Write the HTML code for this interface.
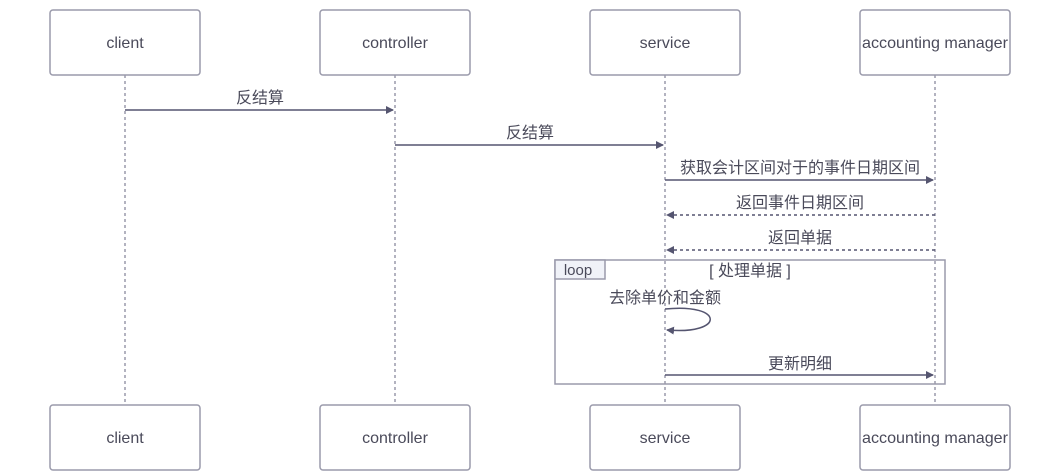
<!DOCTYPE html>
<html><head><meta charset="utf-8"><style>body{margin:0;background:#fff}svg{display:block}</style></head><body>
<svg width="1060" height="471" viewBox="0 0 1060 471" font-family="Liberation Sans, Noto Sans CJK SC, sans-serif">
<defs><marker id="a" markerWidth="8" markerHeight="8" refX="7" refY="4" orient="auto" markerUnits="userSpaceOnUse"><path d="M0,0L8,4L0,8z" fill="#555570"/></marker></defs>
<g stroke="#9a9aab" stroke-width="1.5" stroke-dasharray="3,3">
<line x1="125" y1="75" x2="125" y2="405"/><line x1="395" y1="75" x2="395" y2="405"/><line x1="665" y1="75" x2="665" y2="405"/><line x1="935" y1="75" x2="935" y2="405"/></g>
<g fill="#fff" stroke="#9a9aab" stroke-width="1.5">
<rect x="50" y="10" width="150" height="65" rx="3"/><rect x="320" y="10" width="150" height="65" rx="3"/><rect x="590" y="10" width="150" height="65" rx="3"/><rect x="860" y="10" width="150" height="65" rx="3"/>
<rect x="50" y="405" width="150" height="65" rx="3"/><rect x="320" y="405" width="150" height="65" rx="3"/><rect x="590" y="405" width="150" height="65" rx="3"/><rect x="860" y="405" width="150" height="65" rx="3"/></g>
<g fill="#4a4a5a" font-size="16" text-anchor="middle">
<text x="125" y="48">client</text><text x="395" y="48">controller</text><text x="665" y="48">service</text><text x="935" y="48" textLength="146" lengthAdjust="spacingAndGlyphs">accounting manager</text>
<text x="125" y="443">client</text><text x="395" y="443">controller</text><text x="665" y="443">service</text><text x="935" y="443" textLength="146" lengthAdjust="spacingAndGlyphs">accounting manager</text>
<text x="260" y="103">反结算</text><text x="530" y="138">反结算</text><text x="800" y="173">获取会计区间对于的事件日期区间</text><text x="800" y="208">返回事件日期区间</text><text x="800" y="243">返回单据</text><text x="750" y="276">[ 处理单据 ]</text><text x="665" y="303">去除单价和金额</text><text x="800" y="369">更新明细</text></g>
<g stroke="#555570" stroke-width="1.5" fill="none">
<line x1="125" y1="110" x2="393" y2="110" marker-end="url(#a)"/>
<line x1="395" y1="145" x2="663" y2="145" marker-end="url(#a)"/>
<line x1="665" y1="180" x2="933" y2="180" marker-end="url(#a)"/>
<line x1="935" y1="215" x2="667" y2="215" stroke-dasharray="3,3" marker-end="url(#a)"/>
<line x1="935" y1="250" x2="667" y2="250" stroke-dasharray="3,3" marker-end="url(#a)"/>
<path d="M665,309 C725,303 725,335 667,330" marker-end="url(#a)"/>
<line x1="665" y1="375" x2="933" y2="375" marker-end="url(#a)"/></g>
<rect x="555" y="260" width="390" height="124" fill="none" stroke="#9a9aab" stroke-width="1.5"/>
<rect x="555" y="260" width="50" height="19" fill="#f0f2f8" stroke="#9a9aab" stroke-width="1.5"/>
<text x="578" y="275" text-anchor="middle" font-size="15" fill="#4a4a5a">loop</text>
</svg></body></html>
